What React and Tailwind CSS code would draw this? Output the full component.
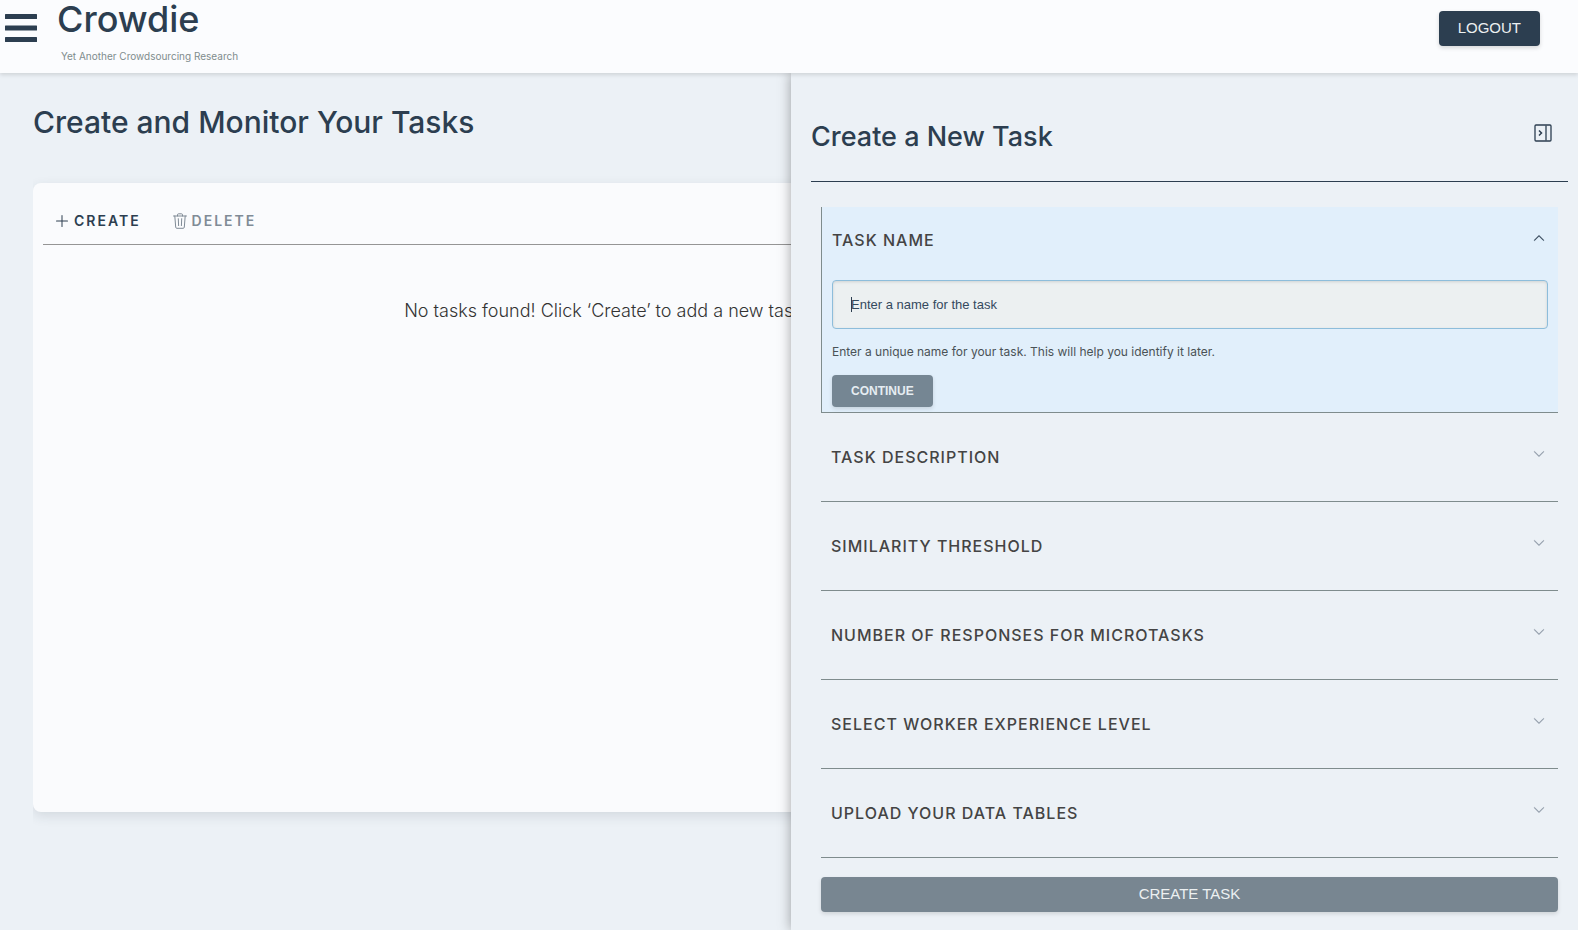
import { useState } from "react";
import { BsChevronDown, BsChevronUp, BsPlusLg } from "react-icons/bs";

const laterSteps = [
  "Task Description",
  "Similarity Threshold",
  "Number of Responses for Microtasks",
  "Select Worker Experience Level",
  "Upload Your Data Tables",
];

function CollapseIcon() {
  return (
    <svg width="18" height="18" viewBox="0 0 18 18" fill="none" aria-hidden="true">
      <rect x="1" y="1" width="16" height="16" rx="1" stroke="#2c3e50" strokeWidth="1.3" />
      <path d="M12 1.5v15" stroke="#2c3e50" strokeWidth="1.3" />
      <path d="M5 6.5 7.5 9 5 11.5" stroke="#2c3e50" strokeWidth="1.5" />
    </svg>
  );
}

function TrashIcon() {
  return (
    <svg
      width="16"
      height="16"
      viewBox="0 0 16 16"
      fill="none"
      stroke="currentColor"
      strokeLinecap="round"
      strokeLinejoin="round"
      aria-hidden="true"
    >
      <path d="M1.5 3h13" />
      <path d="M5.5 3V1.8a1 1 0 0 1 1-1h3a1 1 0 0 1 1 1V3" />
      <path d="M2.8 3l.9 11.2a1.2 1.2 0 0 0 1.2 1.1h6.2a1.2 1.2 0 0 0 1.2-1.1L13.2 3" />
      <path d="M6.3 5.7l.3 6.9M9.7 5.7l-.3 6.9" />
    </svg>
  );
}

function MenuIcon() {
  return (
    <svg width="32" height="28" viewBox="0 0 32 28" fill="#2c3e50" aria-hidden="true">
      <rect y="0" width="32" height="5" rx="0.5" />
      <rect y="11.5" width="32" height="5" rx="0.5" />
      <rect y="23" width="32" height="5" rx="0.5" />
    </svg>
  );
}

function Header() {
  return (
    <header className="relative z-20 flex h-[73px] items-start justify-between bg-[#fbfcfe] pr-[38px] pl-[5px] shadow-[0_2px_4px_rgba(0,0,0,0.12)]">
      <div className="flex items-start gap-5">
        <button type="button" aria-label="Menu" className="mt-[14px]">
          <MenuIcon />
        </button>
        <div>
          <h1 className="text-4xl leading-[38px] font-medium text-[#2c3e50]">Crowdie</h1>
          <p className="mt-[10px] ml-1 text-[10px] leading-4 text-[#7f8c8d]">
            Yet Another Crowdsourcing Research
          </p>
        </div>
      </div>
      <button
        type="button"
        className="mt-[11px] h-[35px] rounded bg-[#2c3e50] px-[19px] font-['Liberation_Sans',Arial,sans-serif] text-[15px] text-[#ecf0f1] shadow-[0_2px_4px_rgba(0,0,0,0.15)]"
      >
        LOGOUT
      </button>
    </header>
  );
}

function TaskBoard() {
  return (
    <main className="mr-[399px] ml-[33px] overflow-hidden pt-8 pb-12">
      <h2 className="text-[30px] leading-[34px] font-medium text-[#2c3e50]">
        Create and Monitor Your Tasks
      </h2>
      <section className="mt-11 min-h-[629px] rounded-lg bg-[#fafbfd] px-[10px] pt-[18px] shadow-[0_4px_12px_rgba(44,62,80,0.13)]">
        <div className="flex h-11 items-center gap-[31px] border-b border-[#959595] pb-1 pl-[11px] text-[14px] font-semibold tracking-[2px]">
          <button type="button" className="flex items-center gap-1 text-[#2c3e50]">
            <BsPlusLg size={16} />
            CREATE
          </button>
          <button type="button" className="flex items-center gap-1 text-[#808b96]">
            <TrashIcon />
            DELETE
          </button>
        </div>
        <p className="mt-[52px] text-center text-[18px] leading-7 font-light text-[#333]">
          No tasks found! Click ‘Create’ to add a new task.
        </p>
      </section>
    </main>
  );
}

function NameStep({ name, onChange }) {
  return (
    <section className="border-b border-l border-[#7f8c8d] bg-[#e1effb] px-[10px] pb-[5px]">
      <div className="flex h-[66px] items-center justify-between pr-[3px]">
        <label
          htmlFor="task-name"
          className="text-base font-medium tracking-[1px] text-[#444] uppercase"
        >
          Task Name
        </label>
        <button type="button" aria-expanded="true" aria-label="Collapse" className="mb-1">
          <BsChevronUp size={12} strokeWidth={0.5} className="text-[#2c3e50]" />
        </button>
      </div>
      <div className="relative mt-[7px]">
        <input
          id="task-name"
          type="text"
          value={name}
          onChange={(event) => onChange(event.target.value)}
          placeholder="Enter a name for the task"
          className="block h-[49px] w-full rounded border border-[#8dbddb] bg-[#ecf0f1] px-[18px] font-['Liberation_Sans',Arial,sans-serif] text-[13px] text-[#2c3e50] caret-transparent shadow-[inset_0_1px_3px_rgba(0,0,0,0.12)] outline-none placeholder:text-[#34495e]"
        />
        <span className="pointer-events-none absolute top-[17px] left-[19px] h-[15px] w-px bg-[#2c3e50]" />
      </div>
      <p className="mt-[13px] text-[12px] leading-5 text-[#4a5256]">
        Enter a unique name for your task. This will help you identify it later.
      </p>
      <button
        type="button"
        className="mt-[13px] block h-8 rounded bg-[#758693] px-[19px] font-['Liberation_Sans',Arial,sans-serif] text-[12px] font-bold text-[#e6edf2] shadow-[0_2px_4px_rgba(0,0,0,0.12)]"
      >
        CONTINUE
      </button>
    </section>
  );
}

function TaskDrawer() {
  const [name, setName] = useState("");
  return (
    <aside className="absolute inset-y-0 right-0 z-10 w-[calc(50%-2px)] bg-[#ecf1f6] pr-[10px] pl-5 shadow-[0_0_12px_rgba(0,0,0,0.35)]">
      <div className="flex h-[109px] items-center justify-between border-b border-[#2c3e50] pt-5 pr-4">
        <h2 className="text-[27px] leading-9 font-medium text-[#2c3e50]">Create a New Task</h2>
        <button type="button" aria-label="Close panel" className="mb-2">
          <CollapseIcon />
        </button>
      </div>
      <form className="px-[10px] pt-[25px]" onSubmit={(event) => event.preventDefault()}>
        <NameStep name={name} onChange={setName} />
        {laterSteps.map((title) => (
          <button
            key={title}
            type="button"
            aria-expanded="false"
            className="flex h-[89px] w-full items-center justify-between border-b border-[#7f8c8d] pr-[13px] pb-px pl-[10px] text-base font-medium tracking-[1px] text-[#444] uppercase"
          >
            {title}
            <BsChevronDown size={12} strokeWidth={0.5} className="mb-[5px] text-[#8c97a5]" />
          </button>
        ))}
        <button
          type="submit"
          className="mt-[19px] block h-[35px] w-full rounded bg-[#788691] font-['Liberation_Sans',Arial,sans-serif] text-[15px] text-[#ecf0f1] shadow-[0_2px_4px_rgba(0,0,0,0.12)]"
        >
          CREATE TASK
        </button>
      </form>
    </aside>
  );
}

export default function App() {
  return (
    <div className="flex min-h-screen flex-col bg-[#ecf1f6] font-['Inter',sans-serif]">
      <Header />
      <div className="relative min-h-[857px] flex-1 overflow-hidden">
        <TaskBoard />
        <TaskDrawer />
      </div>
    </div>
  );
}
